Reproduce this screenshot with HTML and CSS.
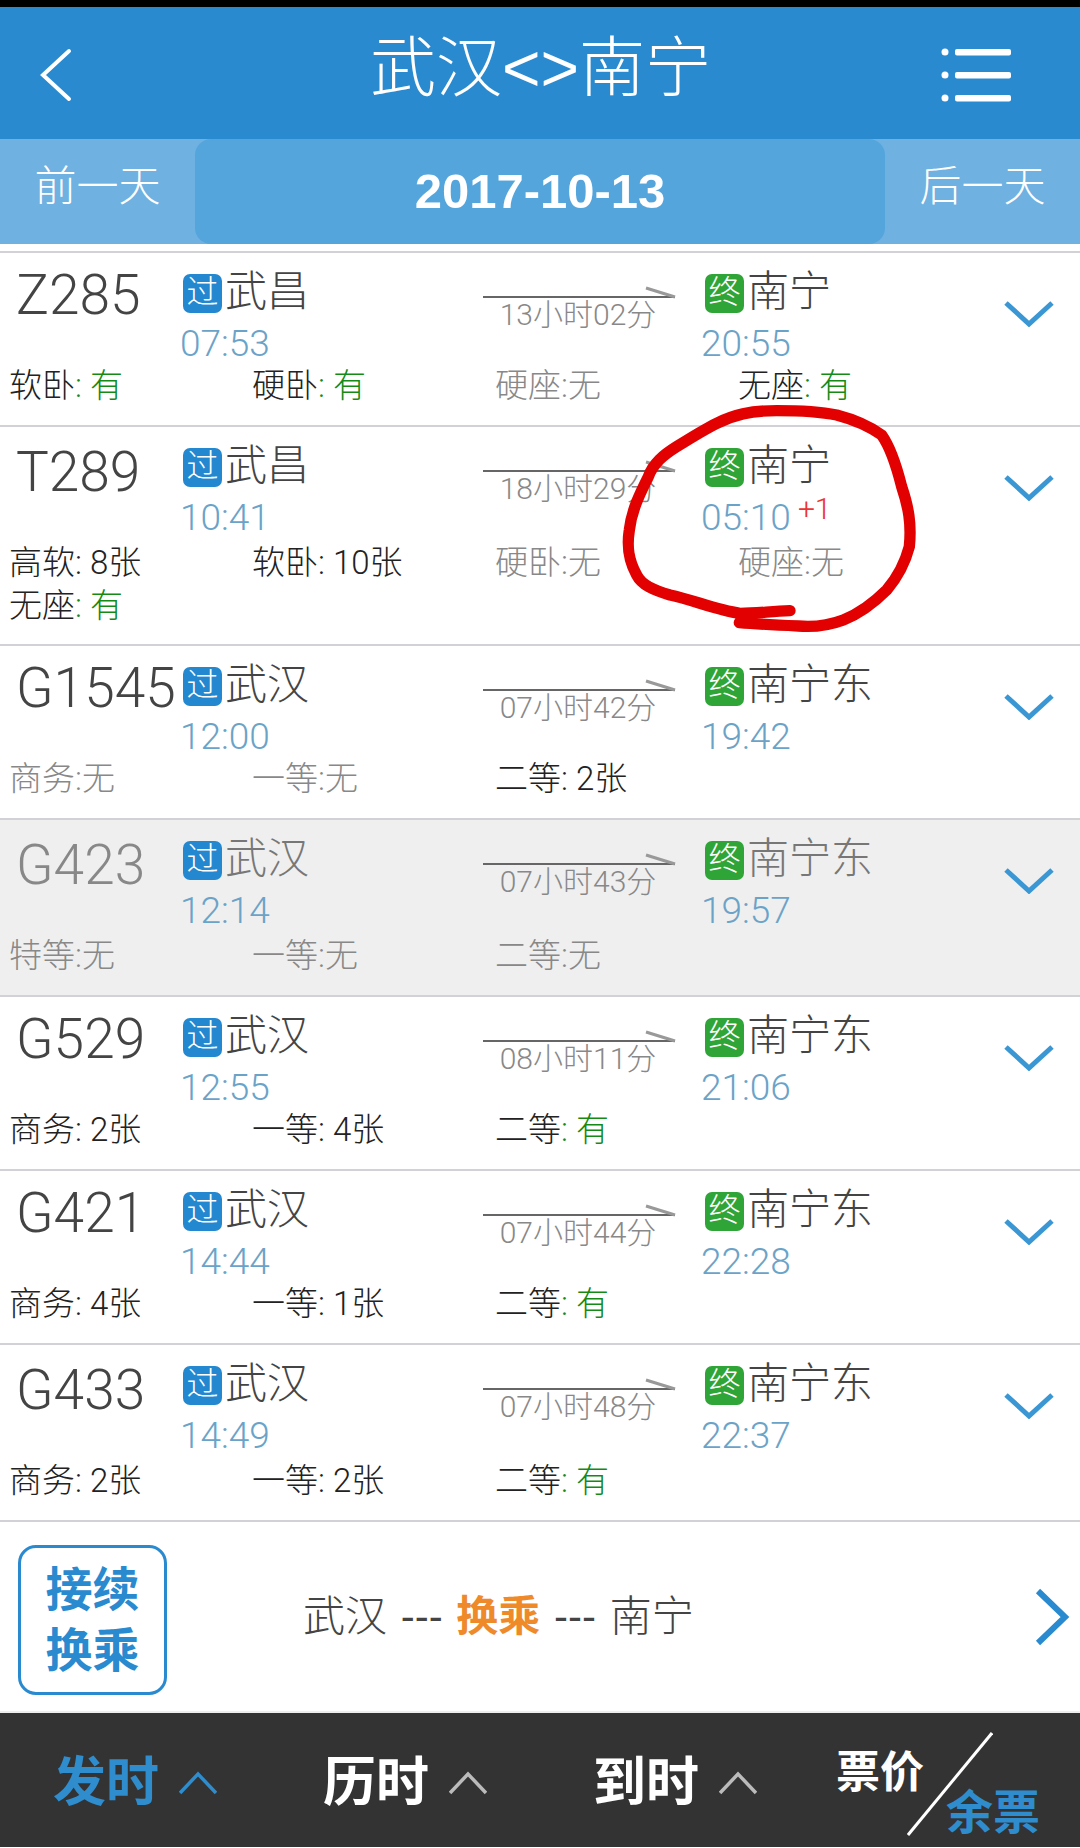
FILE: index.html
```html
<!DOCTYPE html>
<html lang="zh-CN">
<head>
<meta charset="utf-8">
<title>武汉&lt;&gt;南宁</title>
<link rel="stylesheet" href="styles.css">
</head>
<body>
<div class="page">
  <div class="statusbar"></div>
  <header class="header">
    <svg class="back" viewBox="0 0 40 60"><path d="M30 7 L4 31 L30 55"/></svg>
    <h1 class="title">武汉&lt;&gt;南宁</h1>
    <svg class="menu" viewBox="0 0 70 54"><circle cx="4" cy="4" r="3.5"/><circle cx="4" cy="27" r="3.5"/><circle cx="4" cy="50" r="3.5"/><rect x="14" y="1" width="56" height="6.5" rx="2"/><rect x="14" y="24" width="56" height="6.5" rx="2"/><rect x="14" y="47" width="56" height="6.5" rx="2"/></svg>
  </header>
  <nav class="datebar">
    <div class="day-btn">前一天</div>
    <div class="date">2017-10-13</div>
    <div class="day-btn">后一天</div>
  </nav>

  <main class="list">
    <section class="row">
      <div class="top">
        <div class="no">Z285</div>
        <div class="stop dep"><div class="st"><span class="badge pass">过</span><span class="name">武昌</span></div><div class="time">07:53</div></div>
        <div class="dur"><svg class="arrow" viewBox="0 0 192 12"><path class="shaft" d="M0 10H192"/><path class="head" d="M163 1L192 10"/></svg><div class="dur-text">13小时02分</div></div>
        <div class="stop arr"><div class="st"><span class="badge end">终</span><span class="name">南宁</span></div><div class="time">20:55</div></div>
        <svg class="more" viewBox="0 0 50 26"><path d="M2 2L25 23L48 2"/></svg>
      </div>
      <div class="seats">
        <div class="seat"><span>软卧</span><em>: 有</em></div>
        <div class="seat"><span>硬卧</span><em>: 有</em></div>
        <div class="seat none">硬座:无</div>
        <div class="seat"><span>无座</span><em>: 有</em></div>
      </div>
    </section>

    <section class="row shift double">
      <div class="top">
        <div class="no">T289</div>
        <div class="stop dep"><div class="st"><span class="badge pass">过</span><span class="name">武昌</span></div><div class="time">10:41</div></div>
        <div class="dur"><svg class="arrow" viewBox="0 0 192 12"><path class="shaft" d="M0 10H192"/><path class="head" d="M163 1L192 10"/></svg><div class="dur-text">18小时29分</div></div>
        <div class="stop arr"><div class="st"><span class="badge end">终</span><span class="name">南宁</span></div><div class="time">05:10<sup class="plus">+1</sup></div></div>
        <svg class="more" viewBox="0 0 50 26"><path d="M2 2L25 23L48 2"/></svg>
      </div>
      <div class="seats">
        <div class="seat"><span>高软: 8张</span></div>
        <div class="seat"><span>软卧: 10张</span></div>
        <div class="seat none">硬卧:无</div>
        <div class="seat none">硬座:无</div>
        <div class="seat"><span>无座</span><em>: 有</em></div>
      </div>
    </section>

    <section class="row">
      <div class="top">
        <div class="no">G1545</div>
        <div class="stop dep"><div class="st"><span class="badge pass">过</span><span class="name">武汉</span></div><div class="time">12:00</div></div>
        <div class="dur"><svg class="arrow" viewBox="0 0 192 12"><path class="shaft" d="M0 10H192"/><path class="head" d="M163 1L192 10"/></svg><div class="dur-text">07小时42分</div></div>
        <div class="stop arr"><div class="st"><span class="badge end">终</span><span class="name">南宁东</span></div><div class="time">19:42</div></div>
        <svg class="more" viewBox="0 0 50 26"><path d="M2 2L25 23L48 2"/></svg>
      </div>
      <div class="seats">
        <div class="seat none">商务:无</div>
        <div class="seat none">一等:无</div>
        <div class="seat"><span>二等: 2张</span></div>
      </div>
    </section>

    <section class="row shift muted">
      <div class="top">
        <div class="no">G423</div>
        <div class="stop dep"><div class="st"><span class="badge pass">过</span><span class="name">武汉</span></div><div class="time">12:14</div></div>
        <div class="dur"><svg class="arrow" viewBox="0 0 192 12"><path class="shaft" d="M0 10H192"/><path class="head" d="M163 1L192 10"/></svg><div class="dur-text">07小时43分</div></div>
        <div class="stop arr"><div class="st"><span class="badge end">终</span><span class="name">南宁东</span></div><div class="time">19:57</div></div>
        <svg class="more" viewBox="0 0 50 26"><path d="M2 2L25 23L48 2"/></svg>
      </div>
      <div class="seats">
        <div class="seat none">特等:无</div>
        <div class="seat none">一等:无</div>
        <div class="seat none">二等:无</div>
      </div>
    </section>

    <section class="row">
      <div class="top">
        <div class="no">G529</div>
        <div class="stop dep"><div class="st"><span class="badge pass">过</span><span class="name">武汉</span></div><div class="time">12:55</div></div>
        <div class="dur"><svg class="arrow" viewBox="0 0 192 12"><path class="shaft" d="M0 10H192"/><path class="head" d="M163 1L192 10"/></svg><div class="dur-text">08小时11分</div></div>
        <div class="stop arr"><div class="st"><span class="badge end">终</span><span class="name">南宁东</span></div><div class="time">21:06</div></div>
        <svg class="more" viewBox="0 0 50 26"><path d="M2 2L25 23L48 2"/></svg>
      </div>
      <div class="seats">
        <div class="seat"><span>商务: 2张</span></div>
        <div class="seat"><span>一等: 4张</span></div>
        <div class="seat"><span>二等</span><em>: 有</em></div>
      </div>
    </section>

    <section class="row">
      <div class="top">
        <div class="no">G421</div>
        <div class="stop dep"><div class="st"><span class="badge pass">过</span><span class="name">武汉</span></div><div class="time">14:44</div></div>
        <div class="dur"><svg class="arrow" viewBox="0 0 192 12"><path class="shaft" d="M0 10H192"/><path class="head" d="M163 1L192 10"/></svg><div class="dur-text">07小时44分</div></div>
        <div class="stop arr"><div class="st"><span class="badge end">终</span><span class="name">南宁东</span></div><div class="time">22:28</div></div>
        <svg class="more" viewBox="0 0 50 26"><path d="M2 2L25 23L48 2"/></svg>
      </div>
      <div class="seats">
        <div class="seat"><span>商务: 4张</span></div>
        <div class="seat"><span>一等: 1张</span></div>
        <div class="seat"><span>二等</span><em>: 有</em></div>
      </div>
    </section>

    <section class="row shift last">
      <div class="top">
        <div class="no">G433</div>
        <div class="stop dep"><div class="st"><span class="badge pass">过</span><span class="name">武汉</span></div><div class="time">14:49</div></div>
        <div class="dur"><svg class="arrow" viewBox="0 0 192 12"><path class="shaft" d="M0 10H192"/><path class="head" d="M163 1L192 10"/></svg><div class="dur-text">07小时48分</div></div>
        <div class="stop arr"><div class="st"><span class="badge end">终</span><span class="name">南宁东</span></div><div class="time">22:37</div></div>
        <svg class="more" viewBox="0 0 50 26"><path d="M2 2L25 23L48 2"/></svg>
      </div>
      <div class="seats">
        <div class="seat"><span>商务: 2张</span></div>
        <div class="seat"><span>一等: 2张</span></div>
        <div class="seat"><span>二等</span><em>: 有</em></div>
      </div>
    </section>
  </main>

  <section class="transfer">
    <div class="transfer-box">接续<br>换乘</div>
    <div class="route">武汉 --- <b>换乘</b> --- 南宁</div>
    <svg class="go" viewBox="0 0 36 58"><path d="M4 3L31 29L4 55"/></svg>
  </section>

  <footer class="footer">
    <div class="sort active">发时<svg class="caret" viewBox="0 0 38 24"><path d="M1 22L19 3L37 22"/></svg></div>
    <div class="sort">历时<svg class="caret" viewBox="0 0 38 24"><path d="M1 22L19 3L37 22"/></svg></div>
    <div class="sort">到时<svg class="caret" viewBox="0 0 38 24"><path d="M1 22L19 3L37 22"/></svg></div>
    <div class="price">
      <div class="price-top">票价</div>
      <div class="price-bottom">余票</div>
      <svg class="slash" viewBox="0 0 86 104"><path d="M85 1L1 103"/></svg>
    </div>
  </footer>

  <svg class="scribble" viewBox="0 0 960 720"><path d="M540 632C480 634 440 640 390 640C320 630 250 600 180 585C130 570 95 555 80 525C55 480 50 440 58 390C65 330 90 280 115 230C130 190 160 165 200 140C240 115 280 90 320 70C370 45 420 32 500 32C570 32 630 35 680 45C730 58 780 80 815 105C840 140 860 200 875 260C895 320 905 370 898 440C885 490 860 535 830 570C790 610 750 640 700 660C660 675 610 682 565 678C500 675 440 672 388 668"/></svg>
</div>
</body>
</html>
```
FILE: styles.css
```css
* { box-sizing: border-box; }
html, body { margin: 0; padding: 0; background: #fff; }
body { font-family: Roboto, "Noto Sans CJK SC", sans-serif; font-weight: 300; }
.page { position: relative; width: 1080px; height: 1848px; overflow: hidden; background: #fff; }

.statusbar { height: 7px; background: #000; }
.header { height: 132px; background: #2a8ad0; display: flex; align-items: flex-start; position: relative; }
.back { width: 40px; height: 60px; margin: 37px 0 0 39px; flex: none; }
.back path { fill: none; stroke: #fff; stroke-width: 4; stroke-linecap: round; }
.title { flex: 1; margin: 25px 0 0; text-align: center; color: #fff; font: 300 66px/72px "Liberation Sans", "Noto Sans CJK SC", sans-serif; padding-left: 61px; white-space: nowrap; }
.menu { width: 70px; height: 54px; margin: 41px 69px 0 0; flex: none; }
.menu circle, .menu rect { fill: #fff; }

.datebar { height: 105px; background: #6fb1e1; display: flex; }
.day-btn { width: 195px; color: #fff; font-size: 42px; line-height: 96px; text-align: center; }
.date { flex: 1; background: #55a5dd; border-radius: 16px; color: #fff; text-align: center; font: 700 49px/104px "Liberation Sans", sans-serif; }

.list { margin-top: 7px; }
.row { border-top: 2px solid #d2d2d6; height: 174px; }
.row.shift { height: 176px; }
.row.double { height: 219px; }
.row.muted { background: #efefef; height: 177px; }
.row.last { height: 177px; }
.top { display: flex; height: 111px; }
.row.shift .top { height: 114px; }
.no { width: 180px; padding: 10px 0 0 16px; font-size: 55px; line-height: 64px; color: #444; white-space: nowrap; flex: none; }
.row.shift .no { padding-top: 13px; }
.stop { flex: none; }
.dep { width: 300px; }
.arr { width: 300px; }
.st { display: flex; margin: 21px 0 0 3px; height: 39px; }
.badge { width: 39px; height: 39px; border-radius: 7px; color: #fff; font-size: 32px; line-height: 37px; text-align: center; flex: none; }
.badge.pass { background: #2488d0; }
.badge.end { background: #2fa437; }
.name { margin-left: 3px; font-size: 42px; line-height: 36px; color: #444; white-space: nowrap; }
.time { margin-top: 13px; font-size: 37px; line-height: 36px; color: #6ba3c8; white-space: nowrap; }
.arr .time { margin-left: -1px; }
.plus { color: #e33; font-size: 30px; margin-left: 7px; line-height: 0; vertical-align: 11px; }
.dur { width: 222px; padding: 34px 0 0 3px; flex: none; }
.arrow { display: block; width: 192px; height: 12px; overflow: visible; }
.shaft { stroke: #666; stroke-width: 2; fill: none; }
.head { stroke: #999; stroke-width: 3; fill: none; }
.dur-text { width: 190px; margin-top: 1px; text-align: center; font-size: 30px; line-height: 30px; color: #888; white-space: nowrap; }
.more { width: 50px; height: 26px; margin: 48px 0 0 2px; flex: none; }
.more path { fill: none; stroke: #3a97d4; stroke-width: 5; }

.seats { display: grid; grid-template-columns: repeat(4, 243px); padding-left: 9px; }
.seat { font-size: 33px; line-height: 43px; color: #222; white-space: nowrap; }
.seat em { font-style: normal; color: #158a15; }
.seat.none { color: #888; }

.muted .no { color: #888; }
.muted .name { color: #777; }

.transfer { border-top: 2px solid #d2d2d6; height: 191px; display: flex; align-items: center; }
.transfer-box { width: 149px; height: 150px; margin: 23px 0 0 18px; border: 3px solid #2a8ad0; border-radius: 18px; color: #2a8ad0; font-size: 47px; font-weight: 700; line-height: 61px; text-align: center; padding-top: 11px; flex: none; align-self: flex-start; }
.route { margin-left: 136px; flex: 1; font: 300 42px/50px "Liberation Sans", "Noto Sans CJK SC", sans-serif; color: #444; white-space: pre; word-spacing: 2px; }
.route b { color: #ee8a2a; font-weight: 700; }
.go { width: 36px; height: 58px; margin-right: 10px; flex: none; }
.go path { fill: none; stroke: #2a8ad0; stroke-width: 6; }

.footer { margin-top: 2px; height: 134px; background: #333; display: flex; position: relative; box-shadow: 0 -2px 0 #eee; }
.sort { width: 270px; padding: 39px 0 0 53px; color: #fff; font-size: 53px; font-weight: 700; line-height: 62px; display: flex; align-items: flex-start; flex: none; }
.sort.active { color: #2f8ccd; }
.caret { width: 38px; height: 24px; margin: 19px 0 0 20px; }
.caret path { fill: none; stroke: #bbb; stroke-width: 3.5; }
.sort.active .caret path { stroke: #2f8ccd; }
.price { position: relative; flex: 1; padding: 36px 0 0 26px; color: #fff; font-weight: 700; font-size: 44px; line-height: 48px; }
.price-top { white-space: nowrap; }
.price-bottom { margin: -9px 0 0 110px; font-size: 47px; line-height: 50px; color: #2f8ccd; white-space: nowrap; }
.slash { position: absolute; left: 97px; top: 19px; width: 86px; height: 104px; }
.slash path { fill: none; stroke: #fff; stroke-width: 3; }

.scribble { position: absolute; left: 610px; top: 400px; width: 320px; height: 240px; pointer-events: none; }
.scribble path { fill: none; stroke: #e30000; stroke-width: 34; stroke-linecap: round; stroke-linejoin: round; }
```
